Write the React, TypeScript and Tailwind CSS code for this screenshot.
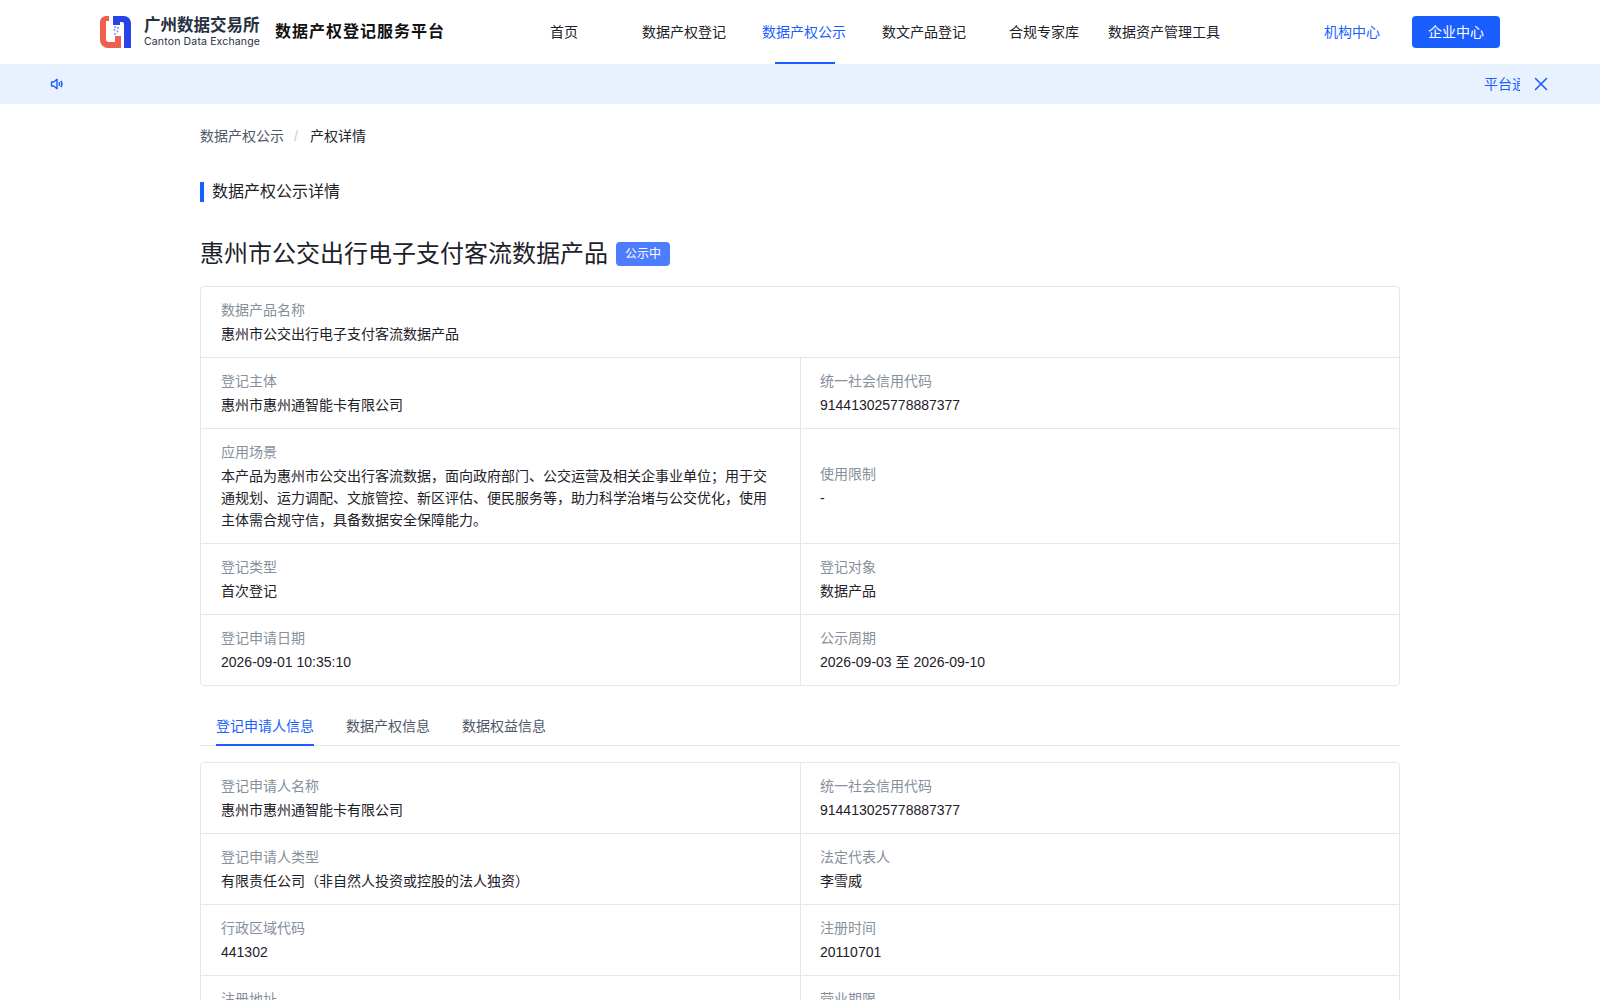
import React from "react";
import { X } from "lucide-react";

const font = "font-['Liberation_Sans','Noto_Sans_CJK_SC',sans-serif]";

const navItems = ["首页", "数据产权登记", "数据产权公示", "数文产品登记", "合规专家库", "数据资产管理工具"];

function Logo() {
  return (
    <svg width="31" height="32" viewBox="0 0 31 32" className="shrink-0">
      <path d="M0 6a6 6 0 0 1 6-6h3v5H6v18a3 3 0 0 0 3 3h6v-6h6v12H8a8 8 0 0 1-8-8z" fill="#ee5f50" />
      <path d="M13 0h11a7 7 0 0 1 7 7v25h-7V8a2 2 0 0 0-2-2h-2v3h-7z" fill="#2a43e8" />
      <g fill="#7d8ff0">
        <circle cx="15" cy="11" r="1" />
        <circle cx="18" cy="12" r="1" />
        <circle cx="14.5" cy="14" r="1" />
        <circle cx="17.5" cy="15.5" r="1" />
        <circle cx="15" cy="18" r="1" />
      </g>
    </svg>
  );
}

function SpeakerIcon() {
  return (
    <svg width="14" height="14" viewBox="0 0 14 14" fill="none" stroke="#1a5eff" strokeWidth="1.4">
      <path d="M1.5 5h2.2L7 2.2v9.6L3.7 9H1.5z" strokeLinejoin="round" />
      <path d="M9 5.2c.6.9.6 2.7 0 3.6" />
      <path d="M11 3.8c1.1 1.8 1.1 4.6 0 6.4" />
    </svg>
  );
}

function Field({ label, value, center }: { label: string; value: React.ReactNode; center?: boolean }) {
  return (
    <div className={`flex flex-col gap-0.5 px-5 py-3 ${center ? "justify-center" : ""}`}>
      <div className="text-sm leading-[22px] text-[#86909c]">{label}</div>
      <div className="text-sm leading-[22px] text-[#1d2129]">{value}</div>
    </div>
  );
}

function Row({ children }: { children: React.ReactNode }) {
  return (
    <div className="grid grid-cols-[600px_1fr] border-b border-[#e5e6eb] last:border-b-0 [&>*:first-child]:border-r [&>*:first-child]:border-[#e5e6eb] [&>*:last-child]:pl-[19px]">
      {children}
    </div>
  );
}

export default function App() {
  return (
    <div className={`h-screen overflow-hidden bg-white ${font}`}>
      {/* header */}
      <header className="flex h-16 items-center bg-white pl-[100px]">
        <Logo />
        <div className="ml-[13px] flex w-[117px] flex-col">
          <span className="text-[16.5px] leading-[19px] font-bold whitespace-nowrap text-[#27303f]">广州数据交易所</span>
          <span className="font-['Inter',sans-serif] text-[10.5px] leading-[13px] tracking-[0.15px] whitespace-nowrap text-[#27303f]">Canton Data Exchange</span>
        </div>
        <div className="ml-[14px] w-[170px] text-base font-bold tracking-[1px] whitespace-nowrap text-[#111]">数据产权登记服务平台</div>
        <nav className="ml-[59px] flex h-full">
          {navItems.map((item, i) => (
            <div
              key={item}
              className={`relative flex h-full w-[120px] items-center justify-center text-sm whitespace-nowrap ${i === 2 ? "text-[#1a5eff]" : "text-[#1d2129]"}`}
            >
              {item}
              {i === 2 && <span className="absolute bottom-0 left-[31px] h-0.5 w-[60px] bg-[#1a5eff]" />}
            </div>
          ))}
        </nav>
        <div className="ml-[100px] text-sm text-[#1a5eff]">机构中心</div>
        <button className="ml-8 h-8 w-[88px] rounded bg-[#1a5eff] text-sm text-white">企业中心</button>
      </header>

      {/* notice */}
      <div className="flex h-10 items-center bg-[#e8f2ff] pr-12 pl-[50px]">
        <SpeakerIcon />
        <div className="ml-[30px] flex-1 overflow-hidden pl-[1390px] text-sm whitespace-nowrap text-[#1a5eff]">平台通知</div>
        <X className="ml-2.5 h-[22px] w-[22px] text-[#1a5eff]" strokeWidth={1.7} />
      </div>

      <main className="mx-auto w-[1200px]">
        <div className="flex h-[64px] items-center text-sm">
          <span className="text-[#4e5969]">数据产权公示</span>
          <span className="mx-2.5 text-[#c9cdd4]">/</span>
          <span className="ml-0.5 text-[#1d2129]">产权详情</span>
        </div>

        <div className="mt-3.5 flex h-5 items-center border-l-4 border-[#1a5eff] pl-2 text-base text-[#1d2129]">数据产权公示详情</div>

        <div className="mt-10 flex h-6 items-center">
          <h1 className="text-2xl leading-8 font-normal text-[#1d2129]">惠州市公交出行电子支付客流数据产品</h1>
          <span className="ml-2 flex h-6 w-[54px] items-center justify-center rounded bg-[#4d7cff] text-xs text-white">公示中</span>
        </div>

        <section className="mt-5 rounded border border-[#e5e6eb]">
          <div className="border-b border-[#e5e6eb]">
            <Field label="数据产品名称" value="惠州市公交出行电子支付客流数据产品" />
          </div>
          <Row>
            <Field label="登记主体" value="惠州市惠州通智能卡有限公司" />
            <Field label="统一社会信用代码" value="914413025778887377" />
          </Row>
          <Row>
            <Field
              label="应用场景"
              value="本产品为惠州市公交出行客流数据，面向政府部门、公交运营及相关企事业单位；用于交通规划、运力调配、文旅管控、新区评估、便民服务等，助力科学治堵与公交优化，使用主体需合规守信，具备数据安全保障能力。"
            />
            <Field label="使用限制" value="-" center />
          </Row>
          <Row>
            <Field label="登记类型" value="首次登记" />
            <Field label="登记对象" value="数据产品" />
          </Row>
          <Row>
            <Field label="登记申请日期" value="2026-09-01 10:35:10" />
            <Field label="公示周期" value="2026-09-03 至 2026-09-10" />
          </Row>
        </section>

        <div className="mt-5 flex h-10 gap-8 border-b border-[#e5e6eb] px-4 text-sm">
          <div className="-mb-px flex items-center border-y-2 border-t-transparent border-b-[#1a5eff] text-[#1a5eff]">登记申请人信息</div>
          <div className="flex items-center text-[#4e5969]">数据产权信息</div>
          <div className="flex items-center text-[#4e5969]">数据权益信息</div>
        </div>

        <section className="mt-4 rounded border border-[#e5e6eb]">
          <Row>
            <Field label="登记申请人名称" value="惠州市惠州通智能卡有限公司" />
            <Field label="统一社会信用代码" value="914413025778887377" />
          </Row>
          <Row>
            <Field label="登记申请人类型" value="有限责任公司（非自然人投资或控股的法人独资）" />
            <Field label="法定代表人" value="李雪威" />
          </Row>
          <Row>
            <Field label="行政区域代码" value="441302" />
            <Field label="注册时间" value="20110701" />
          </Row>
          <Row>
            <Field label="注册地址" value="惠州市" />
            <Field label="营业期限" value="长期" />
          </Row>
        </section>
      </main>
    </div>
  );
}
